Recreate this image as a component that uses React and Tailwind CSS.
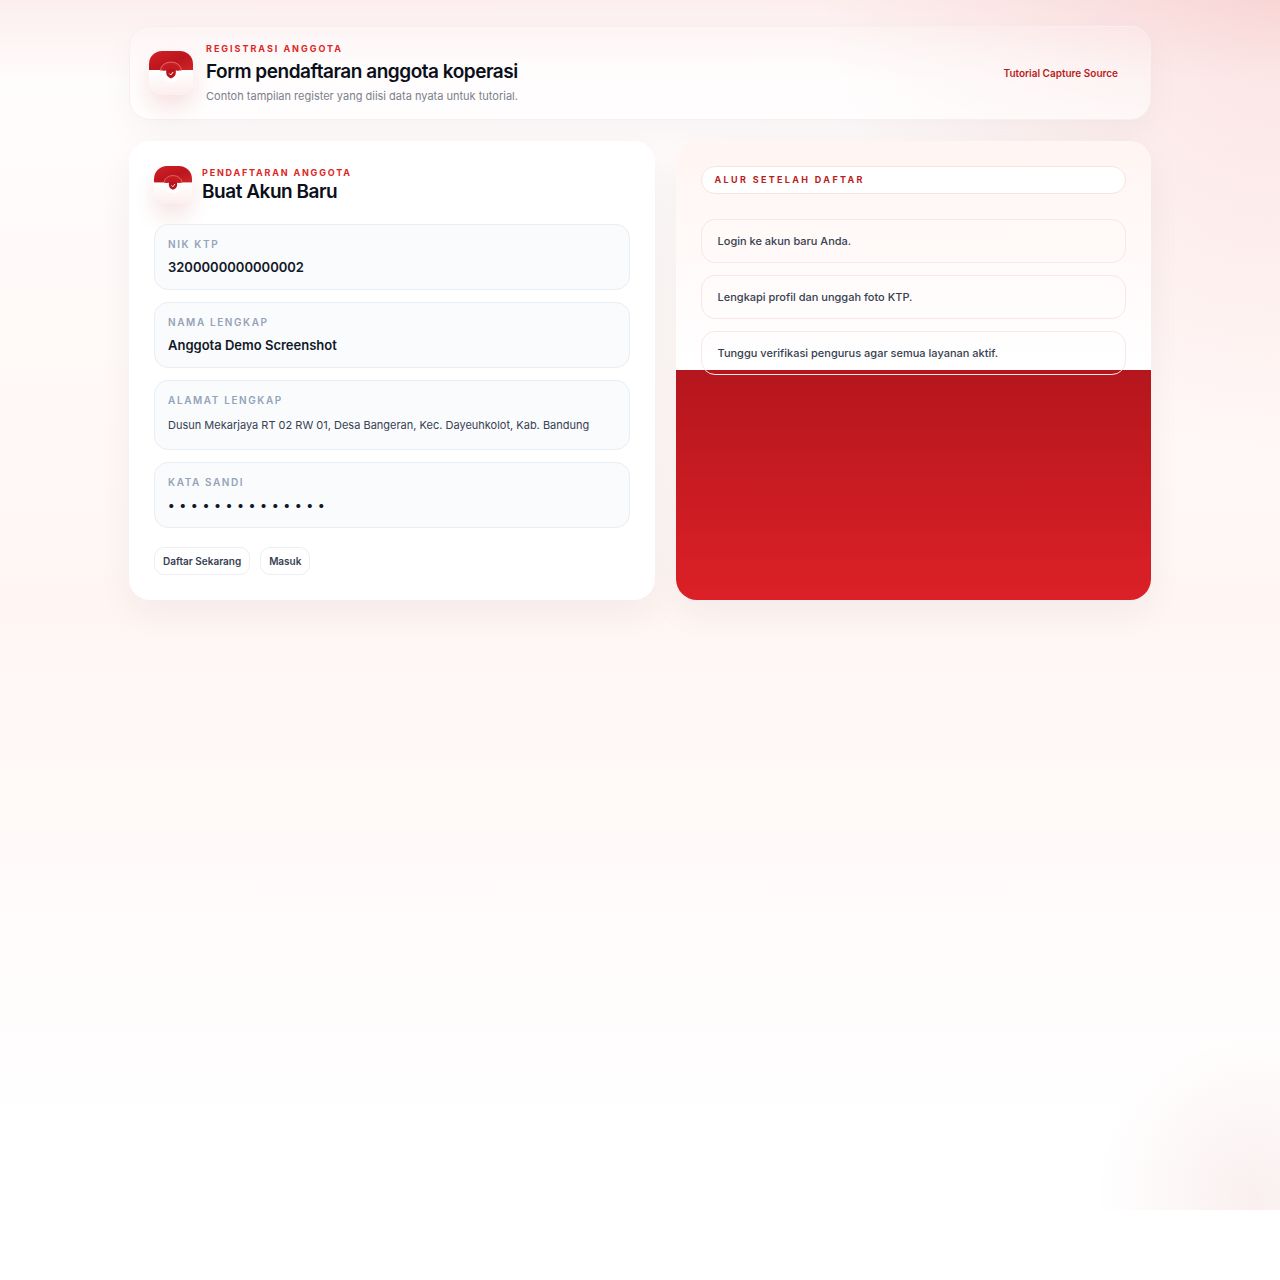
import { useId } from "react";

const steps = [
  "Login ke akun baru Anda.",
  "Lengkapi profil dan unggah foto KTP.",
  "Tunggu verifikasi pengurus agar semua layanan aktif.",
];

function BrandMark({ className }) {
  const id = useId();
  return (
    <div
      className={`shrink-0 overflow-hidden rounded-[13px] shadow-[0_12px_22px_rgba(185,28,28,0.12)] ${className}`}
    >
      <svg viewBox="0 0 44 44" className="block size-full" aria-hidden="true">
        <defs>
          <linearGradient id={`${id}-red`} x1="0" y1="0" x2="1" y2="1">
            <stop offset="0" stopColor="#d41f27" />
            <stop offset="0.55" stopColor="#bb161e" />
            <stop offset="1" stopColor="#d3242b" />
          </linearGradient>
          <linearGradient id={`${id}-white`} x1="0" y1="0" x2="0" y2="1">
            <stop offset="0" stopColor="#ffffff" />
            <stop offset="1" stopColor="#fdeeee" />
          </linearGradient>
        </defs>
        <rect width="44" height="20" fill={`url(#${id}-red)`} />
        <rect y="19" width="44" height="25" fill={`url(#${id}-white)`} />
        <path d="M11.500 19.500a10.500 8.500 0 0 1 21 0" fill="#cb2028" stroke="#ee8a80" strokeWidth="0.7" />
        <circle cx="22" cy="24" r="7.500" fill="#ffffff" />
        <path d="M14 19.500a8 6.500 0 0 1 16 0z" fill="#c41b23" />
        <path
          d="M22 17.500c1.500 1 3 1.300 4.800 1.300v3.200c0 2.600-2 4.500-4.800 5.500c-2.800-1-4.800-2.900-4.800-5.500v-3.200c1.800 0 3.300-0.300 4.800-1.300z"
          fill="#b9151d"
        />
        <path d="M20.600 22.800l1.200 1.200l2.200-2.800" fill="none" stroke="#ffffff" strokeWidth="1" strokeLinecap="round" />
      </svg>
    </div>
  );
}

function Field({ label, type = "text", value, className }) {
  const id = useId();
  return (
    <div className="rounded-[14px] border border-[#e9eef2] bg-[#f9fbfd] px-[13px] py-3">
      <label
        htmlFor={id}
        className="block text-[10px] leading-[14px] font-semibold tracking-[0.16em] text-[#94a3b8] uppercase"
      >
        {label}
      </label>
      <input
        id={id}
        type={type}
        defaultValue={value}
        className={`mt-1.5 block w-full bg-transparent outline-none ${className}`}
      />
    </div>
  );
}

export default function App() {
  return (
    <div className="min-h-[1210px] bg-[radial-gradient(circle_at_100%_0%,rgba(220,38,38,0.12),transparent_460px),radial-gradient(circle_at_98%_99%,rgba(185,28,28,0.07),transparent_160px),linear-gradient(180deg,rgba(220,38,38,0.07),transparent_80px),linear-gradient(180deg,#fffdfd_0%,#fff6f4_50%,#ffffff_95%)] px-8 pt-[26px] font-[Inter,sans-serif]">
      <div className="mx-auto flex max-w-[1022px] flex-col gap-[21px]">
        <header className="flex items-center justify-between rounded-[21px] border border-[#faeeee] bg-[linear-gradient(180deg,rgba(255,255,255,0.15),rgba(255,255,255,0.6))] px-[19px] py-[15px] shadow-[0_13px_35px_rgba(15,23,42,0.04)]">
          <div className="flex items-center gap-[13px]">
            <BrandMark className="size-11" />
            <div>
              <p className="text-[9px] leading-[14px] font-bold tracking-[0.22em] text-[#dc2626] uppercase">
                Registrasi Anggota
              </p>
              <h1 className="mt-1 text-[19px] leading-6 font-semibold tracking-tight text-[#0b0f19]">
                Form pendaftaran anggota koperasi
              </h1>
              <p className="mt-1 text-[11px] leading-4 text-[#7b808b]">
                Contoh tampilan register yang diisi data nyata untuk tutorial.
              </p>
            </div>
          </div>
          <span className="rounded-full px-[13px] text-[10px] leading-4 font-semibold text-[#b91c1c]">
            Tutorial Capture Source
          </span>
        </header>

        <main className="grid grid-cols-[21fr_19fr] gap-[21px]">
          <section className="rounded-[21px] bg-white p-[25px] shadow-[0_14px_35px_rgba(15,23,42,0.05)]">
            <div className="flex items-start gap-2.5">
              <BrandMark className="size-[38px]" />
              <div>
                <p className="text-[9px] leading-[14px] font-bold tracking-[0.2em] text-[#dc2626] uppercase">
                  Pendaftaran Anggota
                </p>
                <h2 className="text-[19px] leading-6 font-semibold tracking-tight text-[#0b0f19]">
                  Buat Akun Baru
                </h2>
              </div>
            </div>

            <form className="mt-5" onSubmit={(e) => e.preventDefault()}>
              <div className="flex flex-col gap-3">
                <Field
                  label="NIK KTP"
                  value="3200000000000002"
                  className="text-[13px] leading-5 font-semibold text-[#111827]"
                />
                <Field
                  label="Nama Lengkap"
                  value="Anggota Demo Screenshot"
                  className="text-[13px] leading-5 font-semibold text-[#111827]"
                />
                <Field
                  label="Alamat Lengkap"
                  value="Dusun Mekarjaya RT 02 RW 01, Desa Bangeran, Kec. Dayeuhkolot, Kab. Bandung"
                  className="text-[11px] leading-6 text-[#374151]"
                />
                <Field
                  label="Kata Sandi"
                  type="password"
                  value="tutorialdemo14"
                  className="text-[13px] leading-5 font-semibold tracking-[5px] text-[#111827]"
                />
              </div>
              <div className="mt-[19px] flex gap-2.5">
                <button
                  type="submit"
                  className="rounded-[10px] border border-[#eceef1] bg-white px-2 py-[5px] text-[10px] leading-4 font-semibold text-[#374151]"
                >
                  Daftar Sekarang
                </button>
                <button
                  type="button"
                  className="rounded-[10px] border border-[#eceef1] bg-white px-2 py-[5px] text-[10px] leading-4 font-semibold text-[#374151]"
                >
                  Masuk
                </button>
              </div>
            </form>
          </section>

          <aside className="rounded-[21px] bg-[linear-gradient(180deg,#fff5f3_0%,#ffffff_50%,#b5161d_50%,#dc2027_100%)] p-[25px] shadow-[0_14px_35px_rgba(15,23,42,0.05)]">
            <h2 className="rounded-[14px] border border-[#f9e3e2] bg-white px-[13px] py-1.5 text-[9px] leading-[14px] font-bold tracking-[0.26em] text-[#b91c1c] uppercase">
              Alur Setelah Daftar
            </h2>
            <ol className="mt-[25px] flex flex-col gap-3">
              {steps.map((step) => (
                <li
                  key={step}
                  className="rounded-[14px] border border-[#f7e7e6] px-4 py-[11px] text-[11px] leading-5 font-medium text-[#374151]"
                >
                  {step}
                </li>
              ))}
            </ol>
          </aside>
        </main>
      </div>
    </div>
  );
}
